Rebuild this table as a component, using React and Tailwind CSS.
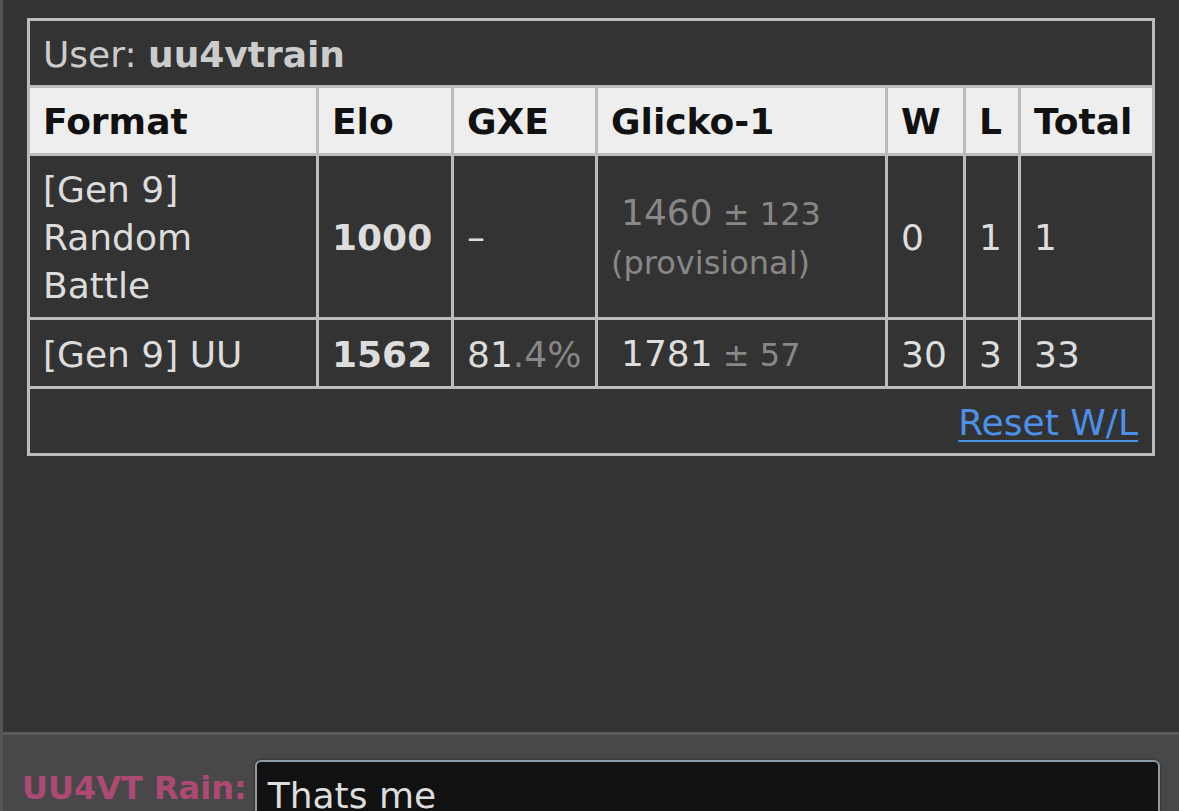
const rows = [
  {
    format: "[Gen 9] Random Battle",
    elo: "1000",
    gxe: null,
    glicko: "1460",
    dev: "123",
    provisional: true,
    w: "0",
    l: "1",
    total: "1",
  },
  {
    format: "[Gen 9] UU",
    elo: "1562",
    gxe: ["81", ".4%"],
    glicko: "1781",
    dev: "57",
    provisional: false,
    w: "30",
    l: "3",
    total: "33",
  },
];

const headers = ["Format", "Elo", "GXE", "Glicko-1", "W", "L", "Total"];

function Cell({ children, className = "" }) {
  return (
    <div
      className={`flex items-center bg-[#333] px-[13px] pt-[10px] pb-[7px] leading-[48px] text-[#ddd] ${className}`}
    >
      {children}
    </div>
  );
}

export default function App() {
  return (
    <div className="h-[811px] overflow-hidden bg-[#333] font-['DejaVu_Sans',sans-serif] text-[36px]">
      <div className="flex h-full border-l-[3px] border-[#555]">
        <div className="flex w-full flex-col">
          <section className="h-[732px] shrink-0 px-[24px] pt-[18px]">
            <div className="grid w-[1128px] grid-cols-[286px_132px_141px_287px_75px_52px_131px] gap-[3px] bg-[#bbb] p-[3px]">
              <div className="col-span-7 bg-[#333] px-[13px] pt-[10px] pb-[6px] leading-[48px] text-[#ccc]">
                User: <strong className="font-bold">uu4vtrain</strong>
              </div>

              {headers.map((h) => (
                <div
                  key={h}
                  className="bg-[#eee] px-[13px] pt-[10px] pb-[7px] font-bold leading-[48px] text-[#111]"
                >
                  {h}
                </div>
              ))}

              {rows.map((r) => (
                <div key={r.format} className="contents">
                  <Cell>{r.format}</Cell>
                  <Cell className="font-bold">{r.elo}</Cell>
                  <Cell>
                    {r.gxe ? (
                      <span>
                        {r.gxe[0]}
                        <span className="text-[#888]">{r.gxe[1]}</span>
                      </span>
                    ) : (
                      "–"
                    )}
                  </Cell>
                  <Cell>
                    {r.provisional ? (
                      <span className="text-[#888]">
                        <span className="pl-[10px]">
                          {r.glicko}
                          <small className="text-[32px]"> ± {r.dev}</small>
                        </span>
                        <br />
                        <span className="text-[32px]">(provisional)</span>
                      </span>
                    ) : (
                      <span className="pl-[10px]">
                        {r.glicko}
                        <small className="text-[32px] text-[#888]"> ± {r.dev}</small>
                      </span>
                    )}
                  </Cell>
                  <Cell>{r.w}</Cell>
                  <Cell>{r.l}</Cell>
                  <Cell>{r.total}</Cell>
                </div>
              ))}

              <div className="col-span-7 bg-[#333] px-[14px] pt-[10px] pb-[6px] text-right leading-[48px]">
                <a
                  href="#"
                  className="text-[#4d90e8] underline decoration-2 underline-offset-[5px]"
                >
                  Reset W/L
                </a>
              </div>
            </div>
          </section>

          <footer className="flex flex-1 items-start gap-[8px] border-t-[3px] border-[#5a5a5a] bg-[#484848] pl-[19px] pt-[25px]">
            <span className="mt-[4px] text-[32px] font-bold leading-[48px] text-[#ad4a73]">
              UU4VT Rain:
            </span>
            <div className="h-[120px] w-[905px] shrink-0 rounded-[6px] border-2 border-[#8e99a6] bg-[#111] px-[11px] pt-[10px] leading-[48px] text-[#ddd] shadow-[0_0_3px_rgba(0,0,0,0.5)]">
              Thats me
            </div>
          </footer>
        </div>
      </div>
    </div>
  );
}
